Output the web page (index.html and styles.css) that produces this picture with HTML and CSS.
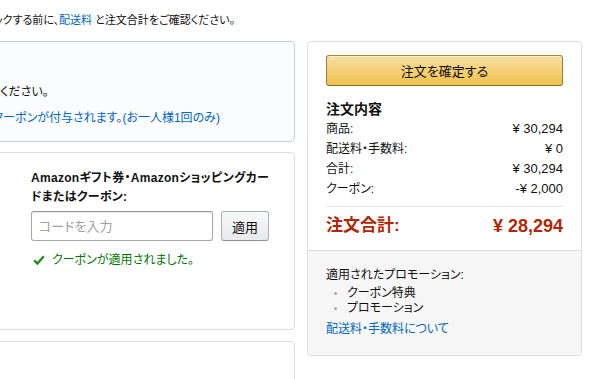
FILE: index.html
```html
<!DOCTYPE html>
<html lang="ja">

<head>
    <meta charset="UTF-8" />
    <meta name="viewport" content="width=device-width, initial-scale=1.0" />
    <title>注文の確定</title>
    <link rel="stylesheet" href="styles.css">
</head>

<body>
    <div class="checkout">
        <div class="main-col">
            <p class="notice">「注文を確定する」ボタンをクリックする前に、<a href="#">配送料</a> と注文合計をご確認ください。</p>

            <!-- Prime info -->
            <div class="box box-info">
                <h4>Amazonプライム</h4>
                <p>プライム会員特典をご利用いただくには、会員にご登録ください。</p>
                <p><a href="#">新規会員登録で、初回のお買い物に使える500円分のクーポンが付与されます。(お一人様1回のみ)</a></p>
            </div>

            <!-- Payment / coupon -->
            <div class="box box-pay">
                <div class="pay-method">
                    <h4>お支払い方法</h4>
                    <p>代金引換</p>
                </div>
                <div class="coupon">
                    <h4>Amazonギフト券・Amazonショッピングカー<br>ドまたはクーポン:</h4>
                    <div class="coupon-form">
                        <input type="text" placeholder="コードを入力" />
                        <button class="btn">適用</button>
                    </div>
                    <p class="coupon-ok">
                        <svg width="12" height="12" viewBox="0 0 12 12">
                            <polyline points="1.2,6.4 4.4,9.6 10.8,2.2" fill="none" stroke="#1e8a1e" stroke-width="2.3" />
                        </svg>
                        クーポンが適用されました。
                    </p>
                </div>
            </div>

            <!-- Items -->
            <div class="box box-items">
                <h4>お届け予定日</h4>
            </div>
        </div>

        <!-- Order summary -->
        <div class="summary">
            <div class="summary-top">
                <button class="btn-primary">注文を確定する</button>
                <h3>注文内容</h3>
                <div class="row"><span>商品:</span><span class="num">¥ 30,294</span></div>
                <div class="row"><span>配送料・手数料:</span><span class="num">¥ 0</span></div>
                <div class="row"><span>合計:</span><span class="num">¥ 30,294</span></div>
                <div class="row"><span>クーポン:</span><span class="num">-¥ 2,000</span></div>
                <div class="row total"><span>注文合計:</span><span class="num">¥ 28,294</span></div>
            </div>
            <div class="summary-bottom">
                <p>適用されたプロモーション:</p>
                <ul>
                    <li>クーポン特典</li>
                    <li>プロモーション</li>
                </ul>
                <a href="#">配送料・手数料について</a>
            </div>
        </div>
    </div>
</body>

</html>
```

FILE: styles.css
```css
* {
    box-sizing: border-box;
    margin: 0;
    padding: 0;
}

body {
    font-family: 'Liberation Sans', 'Noto Sans CJK JP', sans-serif;
    font-feature-settings: "palt";
    font-size: 13px;
    color: #111;
    background: #fff;
    overflow: hidden;
}

a {
    color: #0066c0;
    text-decoration: none;
}

.checkout {
    display: grid;
    grid-template-columns: 605px 275px;
    gap: 12px;
    align-items: start;
    margin-left: -310px;
    padding-top: 12px;
}

.notice {
    font-size: 11px;
    line-height: 16px;
    margin-bottom: 13px;
    padding-left: 160px;
}

.box {
    border: 1px solid #ddd;
    border-radius: 4px;
    background: #fff;
}

.box h4 {
    font-size: 12px;
    line-height: 19px;
}

.box-info {
    background: #fbfcfd;
    border-color: #b6d1e0;
    padding: 12px 30px 14px;
}

.box-info h4 {
    font-size: 13px;
    line-height: 18px;
}

.box-info p {
    font-size: 12px;
    line-height: 18px;
    margin-top: 8px;
}

.box-info h4 + p {
    margin-top: 11px;
}

.box-pay {
    margin-top: 10px;
    display: grid;
    grid-template-columns: 1fr 245px;
    gap: 20px;
    padding: 16px 18px 60px;
}

.coupon h4 {
    letter-spacing: 0.3px;
}

.coupon-form {
    display: flex;
    gap: 8px;
    margin-top: 4px;
}

.coupon-form input {
    width: 182px;
    height: 30px;
    border: 1px solid #a6a6a6;
    border-top-color: #949494;
    border-radius: 3px;
    padding: 0 7px;
    font: inherit;
    font-size: 13px;
    box-shadow: 0 1px 0 rgba(255, 255, 255, 0.5), 0 1px 0 rgba(0, 0, 0, 0.07) inset;
}

.coupon-form input::placeholder {
    color: #a0a0a0;
}

.btn {
    width: 48px;
    height: 30px;
    border: 1px solid #adb1b8;
    border-bottom-color: #8d9096;
    border-radius: 3px;
    background: linear-gradient(to bottom, #f7f8fa, #e7e9ec);
    font: inherit;
    font-size: 13px;
    color: #111;
}

.coupon-ok {
    display: flex;
    align-items: center;
    gap: 7px;
    margin-top: 10px;
    padding-left: 2px;
    font-size: 12px;
    line-height: 18px;
    color: #007600;
}

.box-items {
    margin-top: 11px;
    height: 120px;
    padding: 14px 18px;
}

.summary {
    margin-top: 29px;
    border: 1px solid #ddd;
    border-radius: 4px;
    overflow: hidden;
}

.summary-top {
    padding: 13px 18px 12px;
}

.btn-primary {
    display: block;
    width: 100%;
    height: 31px;
    border: 1px solid #a88734;
    border-color: #a88734 #9c7e31 #846a29;
    border-radius: 3px;
    background: linear-gradient(to bottom, #f7dfa5, #f0c14b);
    box-shadow: 0 1px 0 rgba(255, 255, 255, 0.4) inset;
    font: inherit;
    font-size: 13px;
    color: #111;
}

.summary h3 {
    font-size: 14px;
    line-height: 20px;
    margin-top: 13px;
}

.row {
    display: flex;
    justify-content: space-between;
    font-size: 12px;
    line-height: 20px;
}

.row .num {
    font-size: 13px;
}

.row.total {
    margin-top: 7px;
    padding-top: 7px;
    border-top: 1px solid #e7e7e7;
    line-height: 24px;
    color: #b12704;
    font-weight: bold;
}

.row.total span:first-child {
    font-size: 17px;
}

.row.total .num {
    font-size: 18px;
}

.summary-bottom {
    background: #f6f6f6;
    border-top: 1px solid #ddd;
    padding: 16px 18px 18px;
    font-size: 12px;
    line-height: 16px;
}

.summary-bottom ul {
    margin-top: 3px;
    padding-left: 21px;
    line-height: 15px;
}

.summary-bottom li::marker {
    color: #aaa;
    font-size: 10px;
}

.summary-bottom a {
    display: block;
    margin-top: 5px;
}
```
